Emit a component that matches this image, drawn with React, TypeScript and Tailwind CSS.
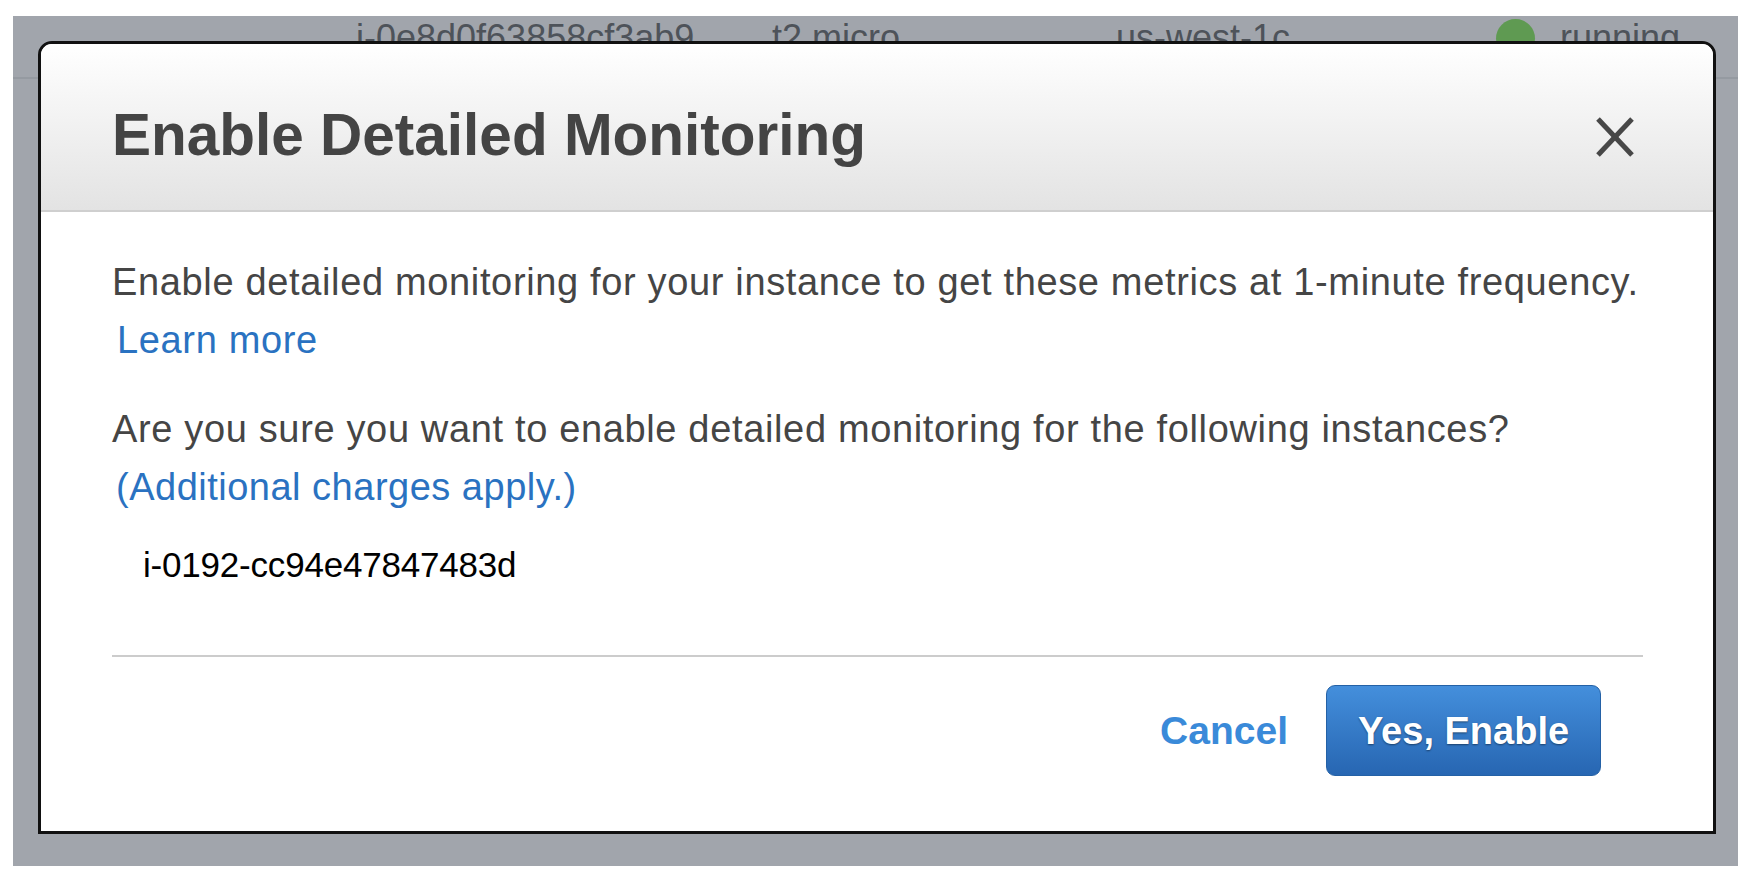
export default function App() {
  const font = { fontFamily: '"Liberation Sans", Arial, Helvetica, sans-serif' };
  return (
    <div className="w-[1754px] h-[894px] bg-white pl-[13px] pt-[16px]" style={font}>
      <div className="relative w-[1725px] h-[850px] bg-[#a1a5ac] overflow-hidden">
        {/* background table row (under the dialog) */}
        <div className="h-[63px] border-b-2 border-[#959aa1] flex items-start pl-[343px] pt-[4px] text-[36px] leading-[36px] text-[#4e535a]">
          <div className="w-[416px]">i-0e8d0f63858cf3ab9</div>
          <div className="w-[344px]">t2.micro</div>
          <div className="w-[380px]">us-west-1c</div>
          <div className="flex items-start gap-[25px]">
            <div className="w-[39px] h-[39px] rounded-full bg-[#5f9a52] -mt-[1px]"></div>
            <div>running</div>
          </div>
        </div>

        {/* dialog */}
        <div className="absolute left-[25px] top-[25px] w-[1678px] h-[793px] border-[3px] border-[#111] rounded-t-[14px] bg-white overflow-hidden flex flex-col">
          <div className="h-[168px] shrink-0 flex items-start justify-between pl-[71px] pr-[78px] pt-[62px] border-b-2 border-[#cfcfcf] bg-gradient-to-b from-[#ffffff] to-[#e3e3e3]">
            <h1 className="text-[58.5px] leading-[58px] font-bold text-[#444444]">Enable Detailed Monitoring</h1>
            <svg width="40" height="40" viewBox="0 0 40 40" className="mt-[11px]">
              <line x1="3" y1="2" x2="37" y2="38" stroke="#474747" strokeWidth="5" />
              <line x1="37" y1="2" x2="3" y2="38" stroke="#474747" strokeWidth="5" />
            </svg>
          </div>

          <div className="pl-[71px] pr-[70px] pt-[41px] text-[38px] leading-[58px] text-[#454545] tracking-[0.65px]">
            <p>Enable detailed monitoring for your instance to get these metrics at 1-minute frequency.</p>
            <p className="pl-[5px] text-[#2a72c1]">Learn more</p>
            <p className="mt-[31px]">Are you sure you want to enable detailed monitoring for the following instances?</p>
            <p className="pl-[4px] text-[#2a72c1] tracking-[0.5px]">(Additional charges apply.)</p>
            <div className="mt-[29px] pl-[31px] text-[35px] leading-[40px] text-black tracking-[-0.2px]">i-0192-cc94e47847483d</div>
            <div className="mt-[70px] h-[2px] bg-[#cccccc]"></div>
            <div className="mt-[28px] flex items-center justify-end pr-[42px] gap-[38px] tracking-normal">
              <span className="text-[39px] font-bold text-[#3a8ad9]">Cancel</span>
              <button className="w-[275px] h-[91px] rounded-[9px] border border-[#2461a6] bg-gradient-to-b from-[#448fdc] to-[#2766b2] text-white text-[38px] font-bold [text-shadow:0_1px_2px_rgba(0,0,0,0.45)]">
                Yes, Enable
              </button>
            </div>
          </div>
        </div>
      </div>
    </div>
  );
}
